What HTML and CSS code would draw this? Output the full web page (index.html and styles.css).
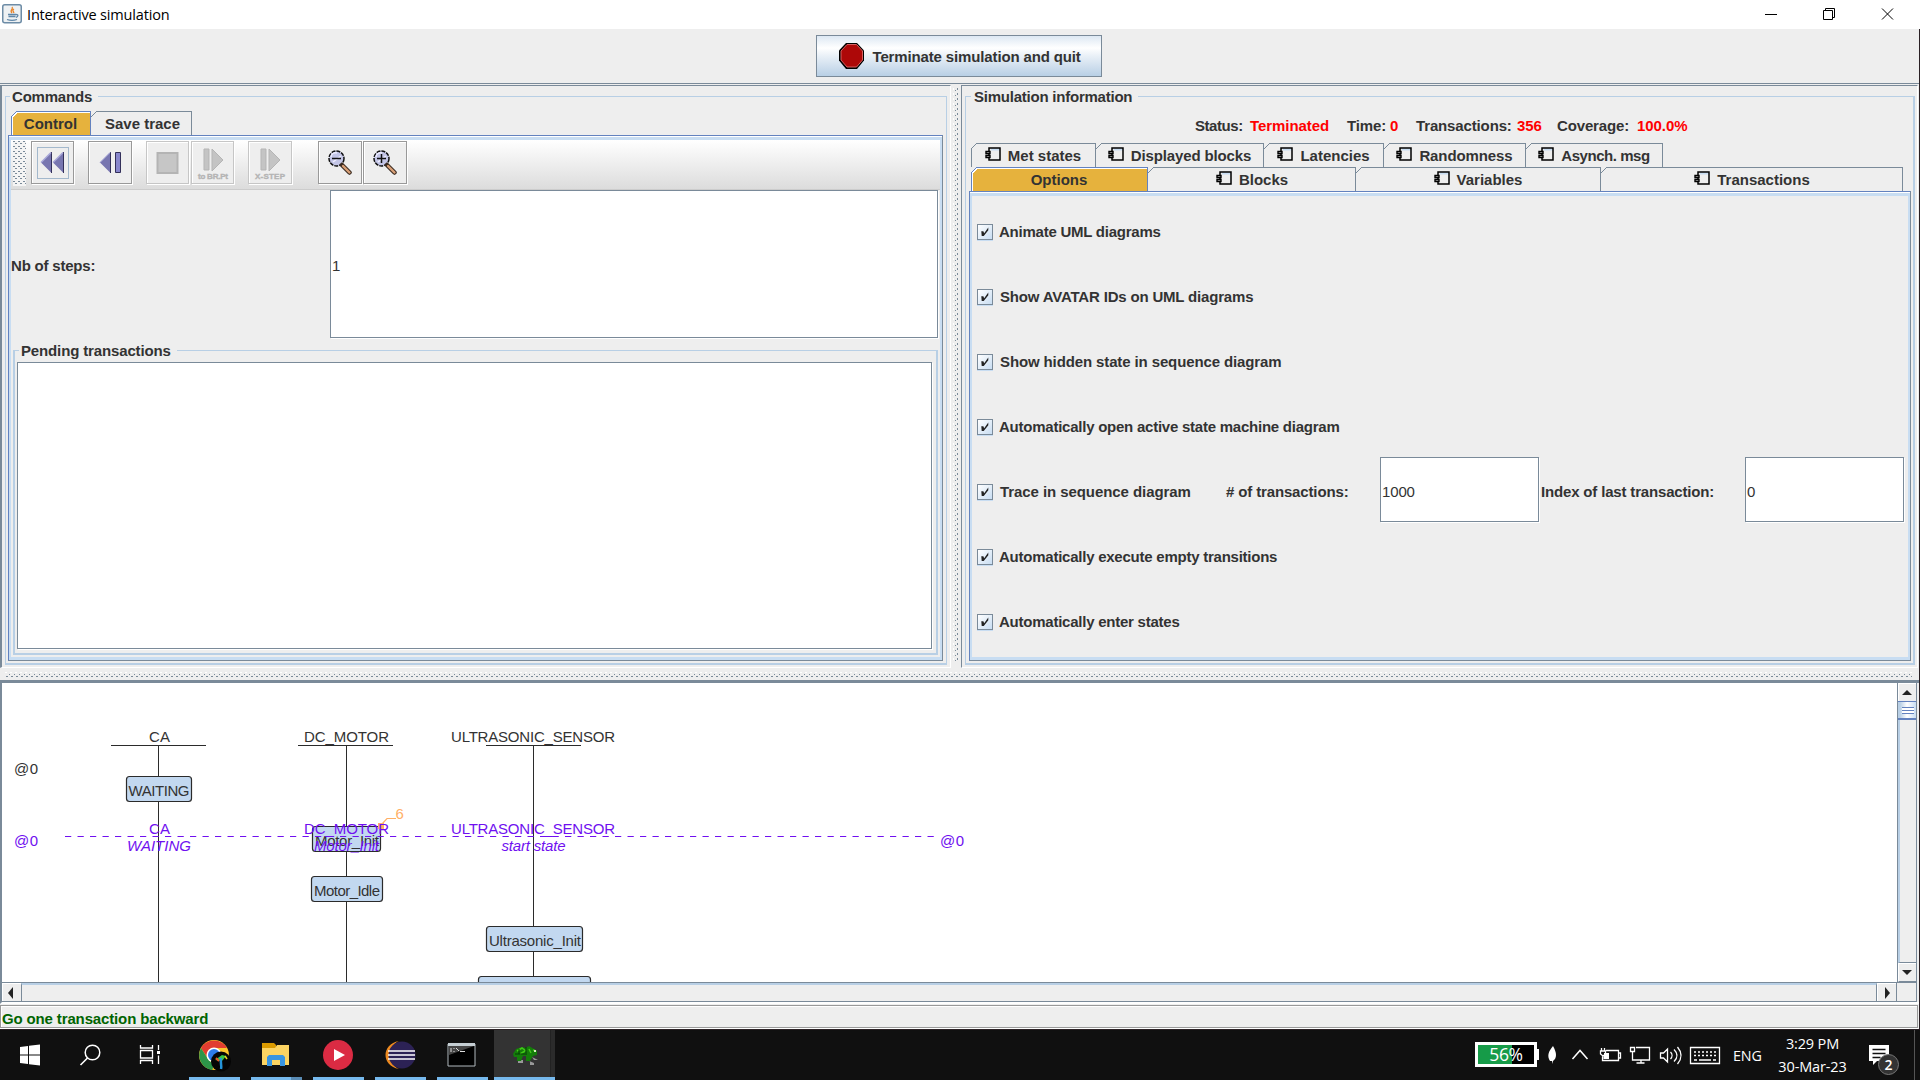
FILE: index.html
```html
<!DOCTYPE html>
<html lang="en">
<head>
<meta charset="utf-8">
<title>Interactive simulation</title>
<link rel="stylesheet" href="styles.css">
</head>
<body>
<svg class="defs" width="0" height="0">
  <symbol id="chip" viewBox="0 0 17 16"><path d="M5 3h10v11H5z" fill="#eee"/><path d="M6 2.500h9" stroke="#c8ddf2" stroke-width="2"/><path d="M4 1h11v12H4z" fill="none" stroke="#000" stroke-width="1.500"/><path d="M1 4.500h4v2H1zM1 8.500h4v2H1z" fill="#eee" stroke="#000" stroke-width="1.400"/></symbol>
  <symbol id="check" viewBox="0 0 16 17"><path d="M3.500 7.500l2.500 0 1 2.500 5-7v3.500l-5.500 7H4z" fill="#222"/></symbol>
  <symbol id="lens" viewBox="0 0 24 25"><circle cx="8.500" cy="8.500" r="7.500" fill="#c3c5e6" stroke="#111" stroke-width="1.500" stroke-dasharray="4 1"/><path d="M3 7c0-3 3-5 6-4M5 12l8-6" stroke="#eef" stroke-width="1.500" fill="none"/><path d="M14 15l7.500 7.500" stroke="#3a2a20" stroke-width="4.500" stroke-linecap="round"/><path d="M15 16l6.500 6.500" stroke="#d9a077" stroke-width="2.400" stroke-linecap="round"/></symbol>
</svg>

<header class="titlebar">
  <svg class="java" width="20" height="20" viewBox="0 0 20 20"><rect x=".75" y=".75" width="18.500" height="18" rx="2" fill="#eef1f3" stroke="#6d8ca6" stroke-width="1.500"/><path d="M10 3c2 2-3 3 0 6M12 5c-2 1-1 2 0 4" stroke="#e8842a" stroke-width="1.300" fill="none"/><path d="M6 10.500h8M6.500 12.500h7M5 15.500c3 1 7 1 10 0M14 10.500c3 0 2 2 0 3" stroke="#5f86a8" stroke-width="1.300" fill="none"/></svg>
  <span class="apptitle">Interactive simulation</span>
  <svg class="winctl" width="136" height="14" viewBox="0 0 136 14" fill="none" stroke="#000"><path d="M1 6.500h12M59.500 2.500h9v9h-9zM61.500 2.500v-2h9v9h-2M118 .5l11 11M129 .5l-11 11"/></svg>
</header>

<div class="window">
<div class="topbar">
  <button class="terminate">
    <svg width="28" height="28" viewBox="0 0 28 28"><path d="M8 1h11l7 7.500v10L19 27H8l-7-8.500v-10z" fill="#000"/><path d="M9 2.500h9.500l6 6.500v9l-6 7H9L3 18V9z" fill="#ad0808" stroke="#d56060"/></svg>
    <span>Terminate simulation and quit</span>
  </button>
</div>

<main class="split">
  <section class="pane left">
    <fieldset class="group commands">
      <legend>Commands</legend>
      <div class="tabs cmdtabs"><div class="tab sel control">Control</div><div class="tab save">Save trace</div></div>
      <div class="panel">
        <div class="toolbar">
          <i class="grip"></i>
          <button class="tool focus b1"><svg width="25" height="24" viewBox="0 0 25 24"><path d="M11.500 1v21L1 11.500zM23.500 1v21L13 11.500z" fill="#7876b0"/><path d="M11.500 1v21M23.500 1v21" stroke="#33305a"/><path d="M1 11.500l10-10M13 11.500l10-10" stroke="#a9a8d8" stroke-width="1.500"/></svg></button>
          <button class="tool b2"><svg width="25" height="24" viewBox="0 0 25 24"><path d="M12.500 1v21L2 11.500z" fill="#7876b0" /><path d="M12.500 1v21" stroke="#33305a"/><path d="M2 11.500l10-10" stroke="#a9a8d8"/><path d="M17.500 1.500h5v20h-5z" fill="#8886cc" stroke="#33305a"/></svg></button>
          <button class="tool off b3"><svg width="24" height="24" viewBox="0 0 24 24"><path d="M1.500 2h20v20h-20z" fill="#c6c6c6" stroke="#b4b4b4" stroke-width="2"/></svg></button>
          <button class="tool off b4"><svg width="32" height="34" viewBox="0 0 32 34"><path d="M7 3h5v21H7zM15 3l11 11-11 11z" fill="#c4c4c4" stroke="#b5b5b5"/><text x="1" y="33" textLength="30">to BR.Pt</text></svg></button>
          <button class="tool off b5"><svg width="32" height="34" viewBox="0 0 32 34"><path d="M7 3h5v21H7zM15 3l11 11-11 11z" fill="#c4c4c4" stroke="#b5b5b5"/><text x="1" y="33" textLength="30">X-STEP</text></svg></button>
          <button class="tool b6"><svg width="24" height="25"><use href="#lens"/><path d="M4 8.500h9" stroke="#111" stroke-width="1.500"/></svg></button>
          <button class="tool b7"><svg width="24" height="25"><use href="#lens"/><path d="M4 8.500h9M8.500 4v9" stroke="#111" stroke-width="1.500"/></svg></button>
        </div>
        <div class="steps"><label>Nb of steps:</label><div class="field">1</div></div>
        <fieldset class="group pending"><legend>Pending transactions</legend><div class="field list"></div></fieldset>
      </div>
    </fieldset>
  </section>

  <div class="vdivider"><i></i></div>

  <section class="pane right">
    <fieldset class="group info">
      <legend>Simulation information</legend>
      <div class="status"><span class="s1">Status:</span><b class="s2">Terminated</b><span class="s3">Time:</span><b class="s4">0</b><span class="s5">Transactions:</span><b class="s6">356</b><span class="s7">Coverage:</span><b>100.0%</b></div>
      <div class="tabs upper">
        <div class="tab first w1"><svg><use href="#chip"/></svg>Met states</div><div class="tab w2"><svg><use href="#chip"/></svg>Displayed blocks</div><div class="tab w3"><svg><use href="#chip"/></svg>Latencies</div><div class="tab w4"><svg><use href="#chip"/></svg>Randomness</div><div class="tab w5"><svg><use href="#chip"/></svg>Asynch. msg</div>
      </div>
      <div class="tabs lower">
        <div class="tab sel w6">Options</div><div class="tab w7"><svg><use href="#chip"/></svg>Blocks</div><div class="tab w8"><svg><use href="#chip"/></svg>Variables</div><div class="tab w9"><svg><use href="#chip"/></svg>Transactions</div>
      </div>
      <div class="panel options">
        <div class="opt"><svg class="cb"><use href="#check"/></svg><span class="o1">Animate UML diagrams</span></div>
        <div class="opt"><svg class="cb"><use href="#check"/></svg><span class="o2">Show AVATAR IDs on UML diagrams</span></div>
        <div class="opt"><svg class="cb"><use href="#check"/></svg><span class="o3">Show hidden state in sequence diagram</span></div>
        <div class="opt"><svg class="cb"><use href="#check"/></svg><span class="o4">Automatically open active state machine diagram</span></div>
        <div class="opt"><svg class="cb"><use href="#check"/></svg><span class="o5">Trace in sequence diagram</span><span class="ntrans">#&nbsp;of transactions:</span><div class="field num">1000</div><span class="idx">Index of last transaction:</span><div class="field num">0</div></div>
        <div class="opt"><svg class="cb"><use href="#check"/></svg><span class="o6">Automatically execute empty transitions</span></div>
        <div class="opt"><svg class="cb"><use href="#check"/></svg><span class="o7">Automatically enter states</span></div>
      </div>
    </fieldset>
  </section>
</main>

<div class="hdivider"></div>

<section class="diagram">
  <div class="viewrow">
    <svg class="canvas" width="1895" height="299" viewBox="2 683 1895 299">
      <g stroke="#2b2b2b" fill="none" shape-rendering="crispEdges"><path d="M111 745.500h95M298 745.500h95M486 745.500h95M158.500 745v237M346.500 745v237M533.500 745v237"/></g>
      <g fill="#c2d8f0" stroke="#2b2b2b" stroke-width="1.200"><rect x="126.500" y="776.500" width="65" height="25" rx="3"/><rect x="312.500" y="826.500" width="68" height="25" rx="3"/><rect x="311.500" y="876.500" width="71" height="25" rx="3"/><rect x="486.500" y="926.500" width="96" height="25" rx="3"/><rect x="478.500" y="976.500" width="112" height="25" rx="3"/></g>
      <g fill="#333"><text x="149" y="742" textLength="21">CA</text><text x="304" y="742" textLength="85">DC_MOTOR</text><text x="451" y="742" textLength="164">ULTRASONIC_SENSOR</text><text x="14" y="774" textLength="24">@0</text><text x="128.500" y="796" textLength="61">WAITING</text><text x="315" y="846" textLength="64">Motor_Init</text><text x="314" y="896" textLength="66">Motor_Idle</text><text x="489" y="946" textLength="92">Ultrasonic_Init</text></g>
      <path d="M378 823h6v6h-6z" fill="#ffb066"/><path d="M382 824l5-5.500h9" fill="none" stroke="#ffb066" stroke-width="1.200"/><text x="395.500" y="819" fill="#ffb066">6</text>
      <path d="M65 836.500h871" stroke="#7010f0" stroke-width="1.200" stroke-dasharray="6.250 6.250"/>
      <g fill="#7010f0"><text x="149" y="834" textLength="21">CA</text><text x="304" y="834" textLength="85">DC_MOTOR</text><text x="451" y="834" textLength="164">ULTRASONIC_SENSOR</text><text x="14" y="846" textLength="24">@0</text><text x="940" y="846" textLength="24">@0</text>
      <g font-style="italic"><text x="127" y="851" textLength="64">WAITING</text><text x="314" y="851" textLength="65">Motor_Init</text><text x="501.500" y="851" textLength="64">start state</text></g></g>
    </svg>
    <div class="vscroll"><i class="up"></i><i class="thumb"></i><i class="track"></i><i class="down"></i></div>
  </div>
  <div class="hscroll"><i class="lt"></i><i class="track"></i><i class="rt"></i><i class="corner"></i></div>
</section>
<footer class="statusbar"><span>Go one transaction backward</span></footer>
</div>

<nav class="taskbar">
  <svg class="syst" width="186" height="50" viewBox="0 1030 186 50" fill="none" stroke="#fff"><path d="M20 1047l8-1v8.500h-8zM29 1045.800l11-1.300v10H29zM20 1055.500h8v8.500l-8-1zM29 1055.500h11v10l-11-1.300z" fill="#fff" stroke="none"/><circle cx="92.500" cy="1052.500" r="7.300" stroke-width="1.500"/><path d="M87.500 1058l-7 7" stroke-width="1.600"/><path d="M140.500 1045v3h12v-3M140.500 1064v-3.500h12v3.500M140.500 1050.500h12v7.500h-12zM158.500 1045v5M158.500 1055.500v8.500" stroke-width="1.300"/><path d="M157 1051h3v3h-3z" fill="#fff" stroke="none"/></svg>
  <div class="task t1"><svg viewBox="0 0 36 36"><circle cx="15" cy="15" r="15" fill="#fbc52c"/><path d="M2 8A15 15 0 0 1 28 8H15a7.500 7.500 0 0 0-7 9z" fill="#e13d30"/><path d="M2 8l7 11a7 7 0 0 0 8 3l-4 8A15 15 0 0 1 2 8" fill="#2d9549"/><circle cx="15" cy="15" r="7.500" fill="#fff"/><circle cx="15" cy="15" r="6" fill="#2f7de9"/><circle cx="22" cy="21.500" r="10" fill="#050505"/><path d="M16 20l7-5 4 1-4 5z" fill="#36c442"/><path d="M17 18l3 3" stroke="#eb5a24" stroke-width="2"/><path d="M22 18c-1 4 1 7 0 11" stroke="#2493d8" stroke-width="2.500" fill="none"/><path d="M26 16l2 3" stroke="#ddd828" stroke-width="1.500"/></svg></div>
  <div class="task t2"><svg viewBox="0 0 36 36"><path d="M1 3h12l2 2v4H1z" fill="#db9b00"/><path d="M1 8h13l2-3h12v20H1z" fill="#fcd462"/><path d="M6 26V17l2-2h14l2 2v9h-5v-6h-8v6z" fill="#3995e1"/></svg></div>
  <div class="task t3"><svg viewBox="0 0 36 36"><circle cx="15" cy="15" r="15" fill="#db2b43"/><path d="M11 9l11 6-11 6z" fill="#fff"/></svg></div>
  <div class="task t4"><svg viewBox="0 0 36 36"><path d="M14 1C-4 4-4 26 14 29C2 24 2 6 14 1" fill="#ee8b21"/><circle cx="17" cy="15" r="13.500" fill="#2c2255"/><path d="M3 11h27M3 15h27M3 19h27" stroke="#fff" stroke-width="1.600"/></svg></div>
  <div class="task t5"><svg viewBox="0 0 36 36"><path d="M1 4h27v22H1z" fill="#000" stroke="#b0b8bd"/><path d="M1 3h27v3H1z" fill="#c5ced3"/><path d="M2 6h25L2 15z" fill="#444"/><path d="M4 8v4M7 8v1M7 11v1M9 8l3 3M13 11.500h5" stroke="#ddd"/></svg></div>
  <div class="task t6"><svg viewBox="0 0 36 36"><path d="M6 20h5v3H6zM15 20h3v5h4v-2M20 17l2 3h4" fill="#999"/><path d="M1 14l3-5 6-2 3 1 4-2 5 3 3 2v4l-4 1-3 5h-4v-5h-3l-2 5H5v-4H2z" fill="#147d0a"/><path d="M5 11l5-3 4 3M8 14l5-3M17 9l2 4M21 10l3 1" stroke="#41c817" stroke-width="1.500" fill="none"/><path d="M3 14h10M14 7v8M7 9v5" stroke="#053d05" fill="none"/><path d="M22 10h2v2h-2z" fill="#d8f0c0"/></svg></div>
  <div class="tray">
    <div class="battery"><span>56%</span></div>
    <svg class="trayicons" width="182" height="50" viewBox="1540 1030 182 50" fill="none" stroke="#fff" stroke-width="1.300"><path d="M1552 1046c-5 6-6 10-3 15h2v3l1-3c4-3 4-8 0-15z" fill="#fff" stroke="none"/><path d="M1571.500 1059l7.500-8.500 7.500 8.500" stroke-width="1.500"/><path d="M1605 1050.500h12.500v10h-16v-4M1618 1053h1.500v5h-1.500M1599.500 1051h5v3l-2.500 2-2.500-2zM1600.500 1048v3M1603.500 1048v3M1602 1056v3"/><path d="M1603 1053h5v6h-5z" fill="#fff" stroke="none"/><path d="M1635 1047.500h13.500v12.500h-17v-7M1640 1060v3M1635.500 1063h8M1629.500 1047.500h4v4h-4zM1631.500 1052v3"/><path d="M1659.500 1053h3l4-4v13l-4-4h-3zM1669.500 1052c2 2 2 5 0 7M1673 1049.500c4 4 4 8 0 12M1676.500 1047c5 6 5 11 0 17"/><path d="M1689.500 1047.500h29v16h-29z"/><path d="M1693 1052h22M1693 1055.500h22" stroke-dasharray="2 2"/><path d="M1693 1060h3M1698 1060h12M1712 1060h3"/></svg>
    <span class="lang">ENG</span>
    <div class="clock"><span class="time">3:29 PM</span><span class="date">30-Mar-23</span></div>
    <svg class="notif" width="34" height="50" viewBox="1868 1030 34 50"><path d="M1869 1045h20v16h-12l-4 4v-4h-4z" fill="#fff"/><path d="M1872.500 1049.500h13M1872.500 1053.500h13M1872.500 1057.500h8" stroke="#111" stroke-width="1.300"/><circle cx="1888.500" cy="1064.500" r="10" fill="#333" stroke="#777"/><text x="1884.500" y="1070" fill="#fff">2</text></svg>
    <i class="peek"></i>
  </div>
</nav>
</body>
</html>
```
FILE: styles.css
```css
* { box-sizing: border-box; }
body { margin: 0; width: 1920px; height: 1080px; overflow: hidden; display: flex; flex-direction: column; background: #eee; color: #333; font: bold 15px/20px "Liberation Sans", Arial, sans-serif; letter-spacing: -.14px; white-space: nowrap; }
.defs { position: absolute; }
svg { display: block; flex: none; letter-spacing: 0; }
button { font: inherit; color: inherit; letter-spacing: inherit; padding: 0; border-radius: 0; }
i { display: block; }

.titlebar { height: 29px; background: #fff; display: flex; align-items: center; padding-left: 2px; }
.java { margin-top: -2px; }
.apptitle { margin-left: 5px; font: 14.5px/20px "Open Sans", sans-serif; color: #000; letter-spacing: -.17px; }
.winctl { margin: 0 20px 0 auto; }

.window { height: 1001px; border-right: 1px solid #2a2024; border-bottom: 1px solid #2a2024; display: flex; flex-direction: column; }
.window > * { flex: none; }
.topbar { height: 55px; border-bottom: 1px solid #7a8a99; display: flex; justify-content: center; padding: 6px 2px 0 0; }
.terminate { width: 286px; height: 42px; border: 1px solid #7a8a99; background: linear-gradient(#dde8f3, #fff 30%, #e9f0f7 50%, #b8cfe5); display: flex; align-items: center; padding-left: 21px; }
.terminate svg { margin-right: 7px; }
.terminate span { padding-top: 2px; }

.split { height: 584px; padding-top: 1px; display: flex; }
.pane { border-top: 1px solid #7a8a99; border-bottom: 1px solid #fff; }
.left { width: 951px; border-left: 2px solid #7a8a99; border-right: 1px solid #fff; padding-left: 3px; }
.right { width: 957px; border-left: 1px solid #7a8a99; border-right: 1px solid #fff; padding-left: 3px; }
.vdivider { width: 10px; padding: 3px 2px 0; }
.vdivider i { width: 6px; height: 574px; background: repeating-linear-gradient(#7a8a99 0 2px, transparent 2px 5px) 4px 0/1px 100% no-repeat, repeating-linear-gradient(transparent 0 2px, #7a8a99 2px 3px, transparent 3px 5px) 2px 0/1px 100% no-repeat, repeating-linear-gradient(#fff 0 2px, transparent 2px 5px) 0 0/1px 100% no-repeat; }
.hdivider { height: 12px; background: repeating-linear-gradient(90deg, transparent 0 1px, #7a8a99 1px 3px, transparent 3px 5px) 5px 8px/1907px 1px no-repeat, repeating-linear-gradient(90deg, transparent 0 4px, #7a8a99 4px 5px) 5px 6px/1907px 1px no-repeat, repeating-linear-gradient(90deg, #fff 0 2px, transparent 2px 5px) 5px 4px/1907px 1px no-repeat; }

.group { min-width: 0; margin: 0; border: 1px solid #b8cfe5; display: block; }
.group > legend { height: 21px; line-height: 21px; padding: 0 6px 0 2px; margin-left: 2px; }
.commands { width: 942px; height: 579px; border-bottom-width: 2px; padding: 4px 3px 2px 2px; }
.info { width: 950px; height: 579px; border-bottom-width: 2px; border-right-width: 2px; padding: 0 2px 2px 3px; }
.commands > legend { letter-spacing: -.2px; }
.info > legend { letter-spacing: -.23px; padding-left: 3px; }

.tabs { display: flex; height: 24px; line-height: 25px; letter-spacing: 0; }
.tab { display: flex; align-items: center; justify-content: center; height: 24px; border-right: 1px solid #7a8a99; --c: #7a8a99;
  background: linear-gradient(135deg, transparent 45%, var(--c) 45% 56%, transparent 56%) 0 0/6px 6px no-repeat, linear-gradient(var(--c), var(--c)) 6px 0/100% 1px no-repeat; }
.tab svg { width: 17px; height: 16px; margin: 0 6px 0 0; }
.tab.first { background: linear-gradient(135deg, transparent 45%, var(--c) 45% 56%, transparent 56%) 0 0/6px 6px no-repeat, linear-gradient(var(--c), var(--c)) 6px 0/100% 1px no-repeat, linear-gradient(var(--c), var(--c)) 0 6px/1px 100% no-repeat; }
.tab.sel { --c: #6382bf; border-right-color: #6382bf;
  background: linear-gradient(135deg, #eee 45%, var(--c) 45% 56%, #fff 56% 68%, #e6b23d 68%) 0 0/6px 6px no-repeat, linear-gradient(var(--c) 0 1px, #fff 1px 2px) 6px 0/100% 2px no-repeat, linear-gradient(90deg, var(--c) 0 1px, #fff 1px 2px) 0 6px/2px 100% no-repeat, #e6b23d; }
.cmdtabs { padding-left: 3px; }
.control { width: 80px; }
.save { width: 101px; padding-left: 3px; }
.upper, .lower { padding-left: 2px; }
.w1 { width: 125px; } .w2 { width: 168px; letter-spacing: -.14px; } .w3 { width: 120px; } .w4 { width: 142px; letter-spacing: -.1px; } .w5 { width: 137px; letter-spacing: -.45px; }
.w6 { width: 177px; } .w7 { width: 208px; padding-left: 1px; } .w8 { width: 245px; } .w9 { width: 302px; padding-left: 1px; }

.panel { border: 1px solid #7a8a99; border-top-color: #6382bf; border-left-color: #6382bf; box-shadow: inset 0 1px #fff, inset 2px 4px #c8ddf2, inset -2px -3px #c8ddf2; height: 526px; padding: 4px 2px 3px 2px; }
.toolbar { height: 50px; border-bottom: 1px solid #ccc; background: linear-gradient(#fff, #dcdcdc); display: flex; padding-top: 1px; }
.grip { width: 13px; height: 45px; margin: 0 5px 0 2px; background: repeating-linear-gradient(90deg, #7a8a99 0 2px, transparent 2px 6px), #f4f4f4; background: conic-gradient(from 0deg at 2px 1px, transparent 270deg, #7a8a99 270deg) 0 0/5px 5px, conic-gradient(from 0deg at 2px 1px, transparent 270deg, #7a8a99 270deg) 2px 2px/5px 5px, #f4f4f4; }
.tool { width: 43px; height: 43px; border: 1px solid #999; background: #eee; display: flex; align-items: center; justify-content: center; box-shadow: inset 1px 1px #fff, 1px 1px #fff; flex: none; }
.tool.off { border-color: #c6c6c6; }
.tool text { font: bold 8px "Liberation Sans", sans-serif; fill: #b4b4b4; stroke: #b4b4b4; stroke-width: .4px; }
.focus { position: relative; }
.focus::after { content: ""; position: absolute; inset: 5px 4px 4px 5px; border: 1px solid #a3b8cc; }
.b2 { margin-left: 14px; width: 44px; } .b3 { margin-left: 14px; } .b4 { margin-left: 2px; } .b5 { margin-left: 14px; width: 44px; } .b6 { margin-left: 26px; width: 44px; } .b7 { margin-left: 1px; width: 44px; }
.field { background: #fff; border: 1px solid #7a8a99; box-shadow: 1px 1px #fff; font-weight: normal; display: flex; align-items: center; padding: 3px 0 0 1px; }
.steps { height: 150px; display: flex; align-items: flex-start; padding-right: 2px; }
.steps label { width: 319px; align-self: center; padding-top: 1px; letter-spacing: -.2px; }
.steps .field { flex: 1; height: 148px; }
.pending { margin: 0 2px; height: 315px; border-width: 1px 2px 2px; padding: 1px 4px 4px 2px; }
.pending > legend { margin-left: 2px; }
.list { height: 287px; }

.status { height: 36px; display: flex; padding: 9px 0 0 226px; }
.status b { color: #f00; letter-spacing: -.07px; }
.s1 { width: 55px; letter-spacing: -.45px; } .s2 { width: 97px; } .s3 { width: 43px; } .s4 { width: 26px; } .s5 { width: 101px; } .s6 { width: 40px; } .s7 { width: 80px; }
.options { height: 470px; padding: 7px 2px 3px 7px; }
.opt { height: 65px; display: flex; align-items: center; }
.cb { width: 16px; height: 16px; border: 1px solid #7a8a99; background: linear-gradient(135deg, #fff, #c8ddf2); box-shadow: 0 1px #c8ddf2; margin-right: 6px; }
.o1, .o4, .o6, .o7 { letter-spacing: -.24px; }
.o2 { padding-left: 1px; letter-spacing: -.18px; } .o3 { padding-left: 1px; letter-spacing: -.12px; }
.o5 { width: 227px; padding-left: 1px; letter-spacing: -.07px; }
.ntrans { width: 154px; }
.num { width: 159px; height: 65px; margin-top: -4px; padding-top: 4px; }
.idx { width: 206px; padding-left: 2px; letter-spacing: -.17px; }

.diagram { height: 324px; border-top: 3px solid #7a8a99; border-left: 2px solid #7a8a99; background: #eee; padding-right: 2px; border-bottom: 2px solid #fff; }
.viewrow { display: flex; height: 299px; }
.canvas { background: #fff; }
.canvas text { font: 15px "Liberation Sans", sans-serif; }
.canvas g[font-style] text { font-style: italic; }
.vscroll { width: 20px; border-left: 1px solid #7a8a99; border-right: 1px solid #7a8a99; display: flex; flex-direction: column; }
.vscroll i, .hscroll i { display: flex; align-items: center; justify-content: center; }
.up { height: 18px; border: 1px solid #fff; border-width: 1px 0 0 1px; padding-right: 2px; }
.up::before { content: ""; border: 5px solid transparent; border-top: 0; border-bottom-color: #222; }
.thumb { height: 19px; border: 1px solid #6382bf; border-width: 1px 0 2px; background: repeating-linear-gradient(#6382bf 0 1px, #fff 1px 3px) 4px 5px/12px 7px no-repeat, linear-gradient(90deg, #b8cfe5 0 2px, #fff 50%, #c8ddf2); }
.vscroll .track { flex: 1; border-left: 2px solid #b8cfe5; border-bottom: 1px solid #7a8a99; }
.down { height: 19px; border: solid #fff; border-width: 1px 0 0 1px; border-bottom: 1px solid #7a8a99; padding-right: 2px; }
.down::before { content: ""; border: 5px solid transparent; border-bottom: 0; border-top-color: #222; }
.hscroll { width: 1915px; height: 20px; border-top: 1px solid #7a8a99; border-bottom: 1px solid #7a8a99; border-right: 1px solid #7a8a99; display: flex; }
.lt, .rt { width: 19px; border: solid #fff; border-width: 1px 0 0 1px; padding-right: 3px; }
.lt::before { content: ""; border: 6px solid transparent; border-left: 0; border-right: 5px solid #222; }
.hscroll .track { flex: 1; border-left: 1px solid #7a8a99; border-right: 1px solid #7a8a99; border-top: 2px solid #b8cfe5; }
.rt { padding-right: 0; }
.rt::before { content: ""; border: 6px solid transparent; border-right: 0; border-left: 5px solid #222; }
.corner { width: 20px; border-left: 1px solid #7a8a99; }
.statusbar { margin: 1px 1px 0 0; height: 23px; border: 1px solid #999; box-shadow: inset 1px 1px #fff, 0 1px #fff; color: #006400; line-height: 26px; padding-left: 1px; }

.taskbar { height: 50px; background: #101010; display: flex; }
.task { width: 51px; height: 50px; border-bottom: 3px solid #76b9ed; margin-left: 11px; padding: 10px 0 0 10px; }
.task svg { width: 36px; height: 36px; }
.t1 { margin-left: 3px; }
.t2 { border: 0; background: linear-gradient(90deg, #76b9ed 40px, #5a8cb5 40px) 0 47px/100% 3px no-repeat; }
.t6 { margin-left: 6px; width: 61px; padding-left: 18px; background: linear-gradient(90deg, #333 56px, #222 56px 57px, #2b2b2b 57px); }
.tray { margin-left: auto; display: flex; align-items: center; color: #fff; font: 15px/20px "Open Sans", sans-serif; }
.battery { position: relative; width: 62px; height: 25px; border: 3px solid #fff; background: linear-gradient(90deg, #169b48 60%, #000 60%); display: flex; justify-content: center; margin-top: -1px; }
.battery::after { content: ""; position: absolute; left: 59px; top: 4px; width: 2px; height: 11px; background: #fff; }
.battery span { font-size: 17.5px; line-height: 18px; letter-spacing: -.3px; }
.trayicons { margin-left: 4px; }
.lang { width: 44px; margin: 2px 0 0 10px; font-size: 14.3px; }
.clock { width: 71px; display: flex; flex-direction: column; align-items: center; line-height: 23px; font-size: 14.5px; margin-top: -1px; }
.notif { margin-left: 20px; }
.notif text { font: 14px "Open Sans", sans-serif; font-weight: 600; }
.peek { width: 1px; height: 50px; background: #555; margin: 0 5px 0 12px; }
```
